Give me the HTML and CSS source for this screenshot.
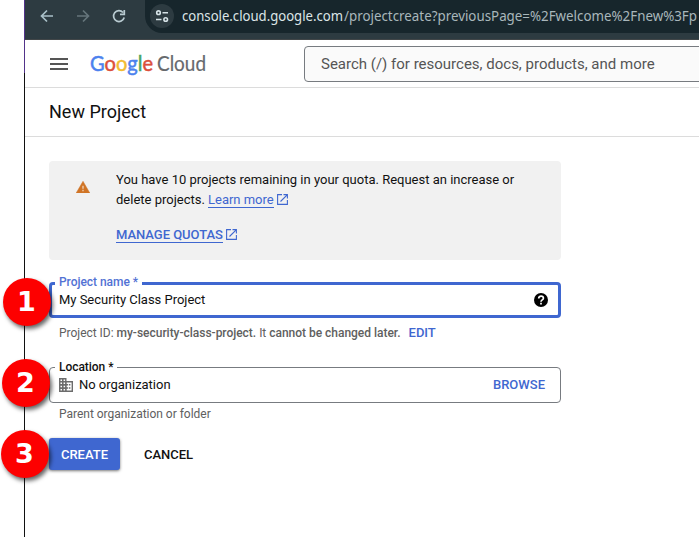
FILE: index.html
```html
<!DOCTYPE html>
<html lang="en">
<head>
<meta charset="utf-8">
<title>New Project</title>
<link rel="stylesheet" href="styles.css">
</head>
<body>
<div class="window">
  <div class="toolbar">
    <svg class="nav" viewBox="0 0 110 40" aria-hidden="true">
      <path d="M28 16H17M22 10.5L16.5 16L22 21.500" stroke="#a9c0c8"/>
      <path d="M52 16H63M58 10.500L63.500 16L58 21.500" stroke="#65757b"/>
      <path d="M98 12.500A5.400 5.400 0 1 0 99.200 17.500M99.300 10V14.300H95" stroke="#b9cbd1"/>
    </svg>
    <div class="address">
      <span class="site">
        <svg viewBox="0 0 24 24" aria-hidden="true"><g fill="none" stroke="#d5e2e6" stroke-width="1.600"><circle cx="8.500" cy="8.700" r="1.800"/><path d="M12.500 8.700H18M6 15.500H11.500"/><circle cx="15.700" cy="15.500" r="1.800"/></g></svg>
      </span>
      <svg class="url" viewBox="0 0 517 32"><text x="0" y="21" textLength="161" lengthAdjust="spacingAndGlyphs" fill="#dde5e7">console.cloud.google.com</text><text x="162" y="21" textLength="353" lengthAdjust="spacingAndGlyphs" fill="#a9b7bb">/projectcreate?previousPage=%2Fwelcome%2Fnew%3Fp</text></svg>
    </div>
  </div>
  <header class="header">
    <div class="menu"><i></i><i></i><i></i></div>
    <svg class="logo" viewBox="0 0 120 32"><text class="google" x="0" y="22.500" textLength="63" lengthAdjust="spacingAndGlyphs"><tspan class="blue">G</tspan><tspan class="red">o</tspan><tspan class="yellow">o</tspan><tspan class="blue">g</tspan><tspan class="green">l</tspan><tspan class="red">e</tspan></text><text class="cloud" x="67" y="22.500" textLength="49" lengthAdjust="spacingAndGlyphs">Cloud</text></svg>
    <div class="search">Search (/) for resources, docs, products, and more</div>
  </header>
  <h1 class="title">New Project</h1>
  <main class="form">
    <section class="quota">
      <svg class="warn" viewBox="0 0 14 12" aria-hidden="true"><path d="M7 .300L13.800 12H.200Z" fill="#d07426" stroke="#d07426" stroke-width=".5" stroke-linejoin="round"/><path d="M7 4.700V7.800M7 8.800V10.200" stroke="#f1d5bb" stroke-width="1.300"/></svg>
      <div class="quota-text">
        <p>You have 10 projects remaining in your quota. Request an increase or<br>delete projects. <a class="link">Learn more</a><svg class="ext" viewBox="0 0 11 11"><path d="M5 .6H.6V10.400H10.400V6M6.500 .6H10.400V4.500M10.200 .8L3.500 7.500"/></svg></p>
        <p class="manage"><a class="link">MANAGE QUOTAS</a><svg class="ext" viewBox="0 0 11 11"><path d="M5 .6H.6V10.400H10.400V6M6.500 .6H10.400V4.500M10.200 .8L3.500 7.500"/></svg></p>
      </div>
    </section>
    <div class="field focused">
      <span class="label">Project name *</span>
      <span class="value">My Security Class Project</span>
      <svg class="help" viewBox="0 0 14 14" aria-hidden="true"><circle cx="7" cy="7" r="7"/><path d="M4.700 5.500C4.700 2.300 9.400 2.500 9.400 5.300C9.400 6.900 7 6.900 7 8.700M7 9.800V11.500" fill="none" stroke="#fff" stroke-width="1.700"/></svg>
    </div>
    <div class="hint project-id"><span>Project ID: <b>my-security-class-project.</b> It <b>cannot be changed later.</b></span><a class="action">EDIT</a></div>
    <div class="field location">
      <span class="label">Location *</span>
      <svg class="building" viewBox="0 0 14 14" aria-hidden="true"><path fill="#6c6c6c" fill-rule="evenodd" d="M0 0H7.500V3H14V14H0ZM1.500 1.600V3H3V1.600ZM4.600 1.600V3H6.100V1.600ZM1.500 4.600V6H3V4.600ZM4.600 4.600V6H6.100V4.600ZM1.500 7.800V9.200H3V7.800ZM4.600 7.800V9.200H6.100V7.800ZM1.500 11V12.400H3V11ZM4.600 11V12.400H6.100V11ZM7.700 4.400V6H9V7.500H7.700V9.200H9V10.700H7.700V12.600H12.600V4.400ZM9.800 6H11.400V7.500H9.800ZM9.800 9.200H11.400V10.700H9.800Z"/></svg>
      <span class="value org">No organization</span>
      <a class="action browse">BROWSE</a>
    </div>
    <div class="hint parent">Parent organization or folder</div>
    <div class="buttons"><button class="create">CREATE</button><button class="cancel">CANCEL</button></div>
  </main>
</div>
<span class="step one">1</span>
<span class="step two">2</span>
<span class="step three">3</span>
</body>
</html>
```

FILE: styles.css
```css
* { box-sizing: border-box; }
body { margin: 0; background: #fff; color: #111; font: 13px/20px Roboto, sans-serif; overflow: hidden; position: relative; height: 537px; }
.window { margin-left: 24px; height: 537px; border-style: solid; border-width: 0 0 0 1px; border-image: linear-gradient(#52338a 74px, #111 74px) 1; overflow: hidden; }
.toolbar { height: 40px; background: #2d3b41; border-bottom: 1px solid #414648; display: flex; }
.nav { width: 110px; height: 40px; flex: none; margin-right: 10px; fill: none; stroke-width: 1.7; }
.address { flex: 1; height: 33px; background: #17262c; border-radius: 0 0 0 17px; display: flex; padding-left: 5px; }
.site { width: 24px; height: 24px; margin: 4px 8px 0 0; border-radius: 50%; background: #2d3b41; flex: none; }
.site svg { width: 24px; height: 24px; display: block; }
.url { width: 517px; height: 32px; font: 14.6px "Noto Sans", sans-serif; flex: none; }
.header { height: 48px; border-bottom: 1px solid #dcdcdc; display: flex; }
.menu { width: 18px; margin: 18px 22px 0 25px; display: flex; flex-direction: column; gap: 3px; flex: none; }
.menu i { height: 2px; background: #555; }
.logo { width: 120px; height: 32px; flex: none; margin: 8px 94px 0 0; font: 21px Lato, sans-serif; }
.google { stroke-width: .5; }
.blue { fill: #4c82ee; stroke: #4c82ee; }
.red { fill: #dc4f3b; stroke: #dc4f3b; }
.yellow { fill: #f2bb32; stroke: #f2bb32; }
.green { fill: #4aa564; stroke: #4aa564; }
.cloud { fill: #66696d; stroke: #66696d; stroke-width: .2; }
.search { flex: none; width: 500px; height: 36px; margin-top: 6px; border: 1px solid #777b80; border-radius: 4px; background: #fafafa; color: #555; font-size: 15px; line-height: 34px; padding-left: 16px; white-space: nowrap; }
.title { margin: 0; height: 49px; padding-left: 24px; border-bottom: 1px solid #dcdcdc; font-size: 18px; font-weight: 400; line-height: 48px; }
.form { width: 512px; margin: 24px 0 0 24px; }
.quota { height: 99px; background: #f1f1f1; border-radius: 4px; display: flex; padding: 9px 0 0 27px; margin-bottom: 22px; }
.warn { width: 14px; height: 12px; margin: 11px 26px 0 0; flex: none; }
p { margin: 0; white-space: nowrap; }
.link { color: #3f67d0; border-bottom: 1px solid #3f67d0; letter-spacing: -.03px; }
.ext { width: 11px; height: 11px; margin-left: 3px; vertical-align: -1px; fill: none; stroke: #3f67d0; stroke-width: 1.1; }
.manage { margin-top: 15px; font-weight: 500; }
.field { height: 36px; border: 1px solid #777b80; border-radius: 4px; position: relative; display: flex; align-items: center; padding-left: 9px; }
.focused { border: 3px solid #3f67d0; padding-left: 7px; }
.value { letter-spacing: -.02px; }
.label { position: absolute; left: 5px; top: -9px; height: 16px; padding: 0 4px; background: #fff; font-size: 12px; line-height: 16px; font-weight: 500; letter-spacing: -.04px; white-space: nowrap; }
.focused .label { left: 3px; top: -11px; color: #5272d4; }
.help { width: 14px; height: 14px; margin-left: auto; margin-right: 10px; }
.hint { color: #606060; font-size: 12px; line-height: 16px; letter-spacing: -.02px; padding-left: 10px; white-space: nowrap; }
.hint b { font-weight: 500; }
.project-id { height: 49px; padding-top: 7px; display: flex; gap: 8px; }
.action { color: #3f67d0; font-size: 13px; font-weight: 500; }
.building { width: 14px; height: 14px; margin-right: 6px; }
.browse { margin-left: auto; margin-right: 15px; }
.parent { height: 35px; padding-top: 3px; }
.buttons { display: flex; }
button { height: 32px; border: 0; padding: 0; font: 500 13px Roboto, sans-serif; background: none; color: #111; }
.create { width: 71px; color: #fff; background: #3f67d0; border-radius: 3px; box-shadow: 0 1px 3px #777; }
.cancel { width: 97px; }
.step { position: absolute; width: 48px; height: 48px; border-radius: 50%; background: #fd0000; color: #fff; font: bold 27px/48px "DejaVu Sans", sans-serif; text-align: center; box-shadow: 2px 3px 4px rgba(0,0,0,.6); }
.one { left: 2.5px; top: 278px; }
.two { left: 1.5px; top: 358.5px; }
.three { left: .5px; top: 429.5px; }
```
